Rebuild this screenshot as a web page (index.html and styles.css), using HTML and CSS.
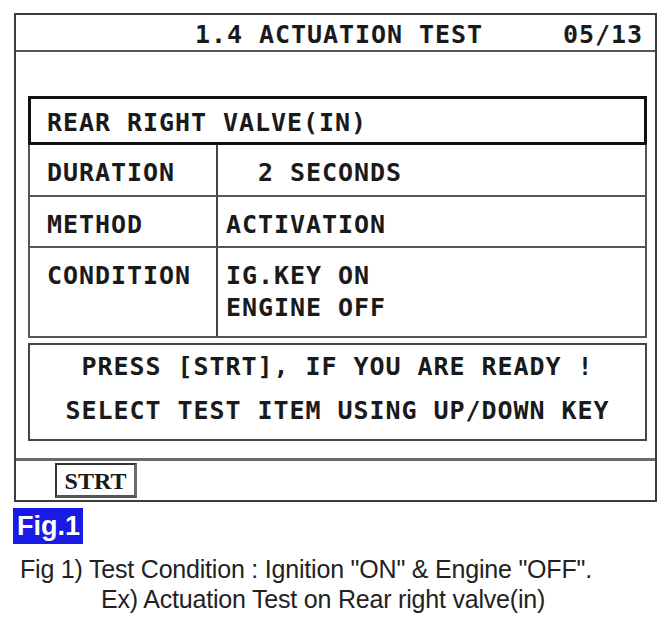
FILE: index.html
```html
<!DOCTYPE html>
<html>
<head>
    <title>Actuation Test</title>
    <link rel="stylesheet" href="styles.css">
</head>
<body>
    <div class="screen">
        <div class="screen-title">
            <span class="title">1.4 ACTUATION TEST</span>
            <span class="page-no">05/13</span>
        </div>

        <div class="screen-body">
            <div class="item-row">REAR RIGHT VALVE(IN)</div>
            <div class="params">
                <div class="label">DURATION</div>
                <div class="value">  2 SECONDS</div>
                <div class="label">METHOD</div>
                <div class="value">ACTIVATION</div>
                <div class="label">CONDITION</div>
                <div class="value">IG.KEY ON<br>ENGINE OFF</div>
            </div>
            <div class="message">
                PRESS [STRT], IF YOU ARE READY !<br>
                SELECT TEST ITEM USING UP/DOWN KEY
            </div>
        </div>

        <div class="screen-keys">
            <div class="key">STRT</div>
        </div>
    </div>

    <div class="fig-badge">Fig.1</div>
    <p class="caption">
        <span class="caption-line">Fig 1) Test Condition : Ignition "ON" &amp; Engine "OFF".</span>
        <span class="caption-line caption-indent">Ex) Actuation Test on Rear right valve(in)</span>
    </p>
</body>
</html>
```

FILE: styles.css
```css
body {
    margin: 0;
    background-color: #fff;
    font-family: "Liberation Sans", Arial, sans-serif;
}

/* tester screen */
.screen {
    margin: 13px 14px 0;
    height: 489px;
    box-sizing: border-box;
    border: 2px solid #3c3c3c;
    font-family: "DejaVu Sans Mono", "Liberation Mono", monospace;
    font-weight: bold;
    font-size: 25px;
    letter-spacing: 0.95px;
    color: #1a1a1a;
}

.screen-title {
    display: flex;
    height: 37px;
    box-sizing: border-box;
    padding: 4px 12px 0 179px;
    line-height: 32px;
    border-bottom: 2px solid #555;
}

.page-no {
    margin-left: auto;
}

.screen-body {
    height: 406px;
    box-sizing: border-box;
    padding: 44px 8px 0 12px;
}

.item-row {
    height: 49px;
    box-sizing: border-box;
    padding: 8px 0 0 16px;
    line-height: 32px;
    border: 3px solid #111;
}

.params {
    display: grid;
    grid-template-columns: 188px 1fr;
    grid-template-rows: 52px 51px 90px;
    border-left: 2px solid #555;
    border-right: 2px solid #555;
}

.params .label,
.params .value {
    box-sizing: border-box;
    padding-top: 12px;
    line-height: 32px;
    border-bottom: 2px solid #555;
    white-space: pre;
}

.params .label {
    padding-left: 17px;
    border-right: 2px solid #444;
}

.params .value {
    padding-left: 8px;
}

.message {
    margin-top: 5px;
    height: 98px;
    box-sizing: border-box;
    border: 2px solid #444;
    line-height: 44px;
    text-align: center;
}

.screen-keys {
    height: 42px;
    box-sizing: border-box;
    padding: 2px 0 0 39px;
    border-top: 3px solid #6a6a6a;
}

.key {
    width: 82px;
    height: 35px;
    box-sizing: border-box;
    padding-top: 2px;
    border: 2px solid #333;
    border-right: 3px solid #6a6a6a;
    border-bottom: 3px solid #555;
    font-family: "Liberation Serif", "Times New Roman", serif;
    font-size: 24px;
    letter-spacing: 0;
    line-height: 28px;
    text-align: center;
}

/* figure label and caption */
.fig-badge {
    margin: 6px 0 0 13px;
    width: 70px;
    height: 36px;
    box-sizing: border-box;
    padding-left: 4px;
    background-color: #1a1ae6;
    color: #fff;
    font-weight: bold;
    font-size: 27px;
    line-height: 36px;
}

.caption {
    margin: 10px 0 0 20px;
    font-size: 25px;
    letter-spacing: -0.2px;
    line-height: 30px;
    color: #222;
}

.caption-line {
    display: block;
}

.caption-indent {
    padding-left: 81px;
}
```
